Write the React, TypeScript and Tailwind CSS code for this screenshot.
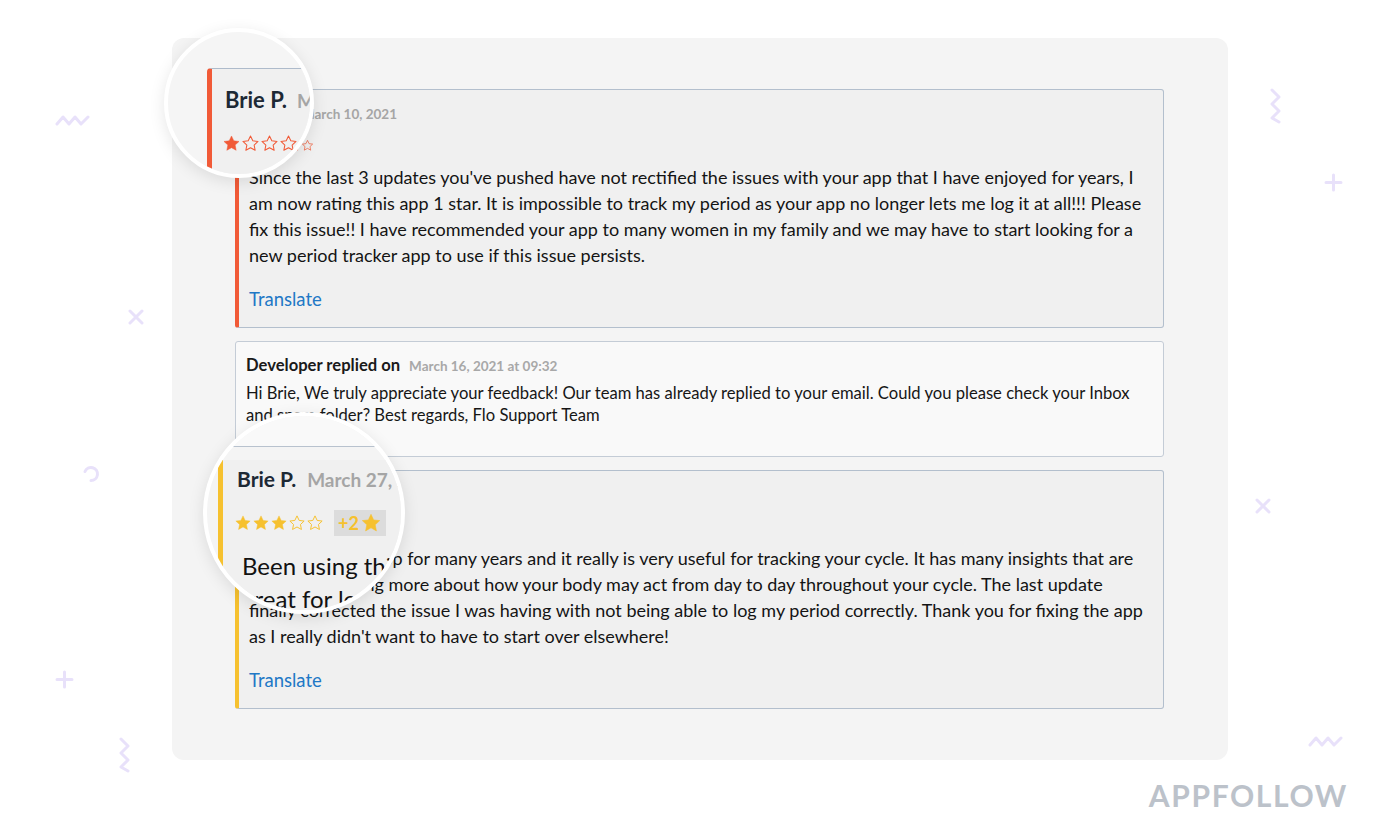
import React from "react";

// ─────────────────────────────────────────────
// Data
// ─────────────────────────────────────────────

const ORANGE = "#f15a37";
const YELLOW = "#f6c12f";
const DECO = "#e8e1fa";

const FIRST_REVIEW =
  "Since the last 3 updates you've pushed have not rectified the issues with your app that I have enjoyed for years, I am now rating this app 1 star. It is impossible to track my period as your app no longer lets me log it at all!!! Please fix this issue!! I have recommended your app to many women in my family and we may have to start looking for a new period tracker app to use if this issue persists.";

const SECOND_REVIEW =
  "Been using this app for many years and it really is very useful for tracking your cycle. It has many insights that are great for learning more about how your body may act from day to day throughout your cycle. The last update finally corrected the issue I was having with not being able to log my period correctly. Thank you for fixing the app as I really didn't want to have to start over elsewhere!";

const STAR_PATH =
  "M12 2.5l2.9 6.1 6.6.8-4.9 4.6 1.3 6.6L12 17.3l-5.9 3.3 1.3-6.6-4.9-4.6 6.6-.8z";

// ─────────────────────────────────────────────
// Small drawings
// ─────────────────────────────────────────────

function Star({ filled, color, size }: { filled: boolean; color: string; size: number }) {
  return (
    <svg
      viewBox="0 0 24 24"
      width={size}
      height={size}
      fill={filled ? color : "none"}
      stroke={color}
      strokeWidth={filled ? 0.6 : 1.3}
      strokeLinejoin="round"
      className="shrink-0"
    >
      <path d={STAR_PATH} />
    </svg>
  );
}

function Stars({ rating, color, size }: { rating: number; color: string; size: number }) {
  return (
    <div className="flex items-center">
      {[1, 2, 3, 4, 5].map((i) => (
        <Star key={i} filled={i <= rating} color={color} size={size} />
      ))}
    </div>
  );
}

function ZigzagH() {
  return (
    <svg viewBox="0 0 36 14" width={36} height={14} fill="none" stroke={DECO} strokeWidth={3} strokeLinecap="round" strokeLinejoin="round">
      <polyline points="2,11 8,4 14,11 20,4 26,11 33,4" />
    </svg>
  );
}

function ZigzagV() {
  return (
    <svg viewBox="0 0 14 36" width={14} height={36} fill="none" stroke={DECO} strokeWidth={3} strokeLinecap="round" strokeLinejoin="round">
      <polyline points="4,2 11,9 4,16 11,23 4,30 11,34" />
    </svg>
  );
}

function Cross() {
  return (
    <svg viewBox="0 0 18 16" width={18} height={16} fill="none" stroke={DECO} strokeWidth={3} strokeLinecap="round">
      <path d="M3 2q6 6 12 12M15 2q-6 6-12 12" />
    </svg>
  );
}

function Plus() {
  return (
    <svg viewBox="0 0 19 19" width={19} height={19} fill="none" stroke={DECO} strokeWidth={3} strokeLinecap="round">
      <path d="M9.5 2v15M2 9.5h15" />
    </svg>
  );
}

function Arc() {
  return (
    <svg viewBox="0 0 20 20" width={20} height={20} fill="none" stroke={DECO} strokeWidth={3} strokeLinecap="round">
      <path d="M4 7.5A6.5 6.5 0 1 1 10 16.5" />
    </svg>
  );
}

// ─────────────────────────────────────────────
// Review card
// ─────────────────────────────────────────────

function ReviewCard({
  accent,
  color,
  date,
  rating,
  bonus,
  text,
}: {
  accent: string;
  color: string;
  date: string;
  rating: number;
  bonus?: boolean;
  text: string;
}) {
  return (
    <div className={`rounded-[3px] border border-[#b3bfcd] border-l-4 ${accent} bg-[#f0f0f0] pt-[13px] pb-[15px] pl-[10px] pr-[14px]`}>
      <div className="flex h-[20px] items-baseline gap-[5px] leading-[20px]">
        <span className="text-[17px] font-bold text-[#1d2935]">Brie P.</span>
        <span className="text-[13.5px] font-bold text-[#a5a5a5]">{date}</span>
      </div>
      <div className="mt-[14px] flex h-[16px] items-center gap-[6px]">
        <Stars rating={rating} color={color} size={13} />
        {bonus && (
          <span className="flex items-center bg-[#dddddd] px-[3px] text-[12px] font-bold leading-[16px] text-[#f6c12f]">
            +2
            <Star filled color={color} size={13} />
          </span>
        )}
      </div>
      <p className="mt-[11px] text-[18px] leading-[26px] text-[#141414]">{text}</p>
      <div className="mt-[18px] text-[18.5px] leading-[26px] text-[#2178c6]">Translate</div>
    </div>
  );
}

// ─────────────────────────────────────────────
// Page
// ─────────────────────────────────────────────

export default function App() {
  return (
    <div className="relative h-[834px] w-[1400px] overflow-hidden bg-white pt-[38px] font-['Lato','Noto_Sans',sans-serif]">
      {/* background doodles */}
      <div className="absolute left-[55px] top-[113px]"><ZigzagH /></div>
      <div className="absolute left-[127px] top-[309px]"><Cross /></div>
      <div className="absolute left-[81px] top-[464px]"><Arc /></div>
      <div className="absolute left-[55px] top-[670px]"><Plus /></div>
      <div className="absolute left-[117px] top-[737px]"><ZigzagV /></div>
      <div className="absolute left-[1268px] top-[88px]"><ZigzagV /></div>
      <div className="absolute left-[1324px] top-[173px]"><Plus /></div>
      <div className="absolute left-[1254px] top-[498px]"><Cross /></div>
      <div className="absolute left-[1308px] top-[734px]"><ZigzagH /></div>

      {/* ── PANEL ── */}
      <div className="relative mx-auto w-[1056px] rounded-[12px] bg-[#f4f4f4] pt-[51px] pb-[51px] pl-[63px] pr-[64px]">
        <div className="flex flex-col gap-[13px]">
          <ReviewCard
            accent="border-l-[#f15a37]"
            color={ORANGE}
            date="March 10, 2021"
            rating={1}
            text={FIRST_REVIEW}
          />

          {/* Developer reply */}
          <div className="rounded-[3px] border border-[#c4ccd6] bg-[#f9f9f9] pt-[13px] pb-[30px] pl-[10px] pr-[14px]">
            <div className="flex h-[20px] items-baseline gap-[9px] leading-[20px]">
              <span className="text-[16.6px] font-bold text-[#1a1a1a]">Developer replied on</span>
              <span className="text-[13.5px] font-bold text-[#a8a8a8]">March 16, 2021 at 09:32</span>
            </div>
            <p className="mt-[7px] text-[16.6px] leading-[22px] text-[#161616]">
              Hi Brie, We truly appreciate your feedback! Our team has already replied to your email. Could you please check your Inbox and spam folder? Best regards, Flo Support Team
            </p>
          </div>

          <ReviewCard
            accent="border-l-[#f6c12f]"
            color={YELLOW}
            date="March 27, 2021"
            rating={3}
            bonus
            text={SECOND_REVIEW}
          />
        </div>
      </div>

      {/* ── LOGO ── */}
      <div className="mt-[17px] flex justify-end pr-[52px]">
        <span className="text-[30px] font-bold leading-[36px] tracking-[1.6px] text-[#bcc2ca]">APPFOLLOW</span>
      </div>

      {/* ── MAGNIFIER 1 ── */}
      <div className="absolute left-[164px] top-[28px] h-[150px] w-[150px] overflow-hidden rounded-full border-4 border-white bg-[#f5f5f5] shadow-[0_4px_16px_rgba(0,0,0,0.10)]">
        <div className="absolute left-[39px] top-[36px] h-[200px] w-[320px] rounded-tl-[4px] border-t border-l-[5px] border-t-[#aebbcb] border-l-[#f15a37] bg-[#f0f0f0] pl-[13px] pt-[18px]">
          <div className="flex items-baseline gap-[10px] whitespace-nowrap leading-[26px]">
            <span className="text-[22px] font-bold text-[#1d2935]">Brie P.</span>
            <span className="text-[19px] font-bold text-[#a5a5a5]">March 10, 2021</span>
          </div>
          <div className="mt-[20px] -ml-[3px]">
            <Stars rating={1} color={ORANGE} size={19} />
          </div>
        </div>
      </div>

      {/* ── MAGNIFIER 2 ── */}
      <div className="absolute left-[203px] top-[412px] h-[202px] w-[202px] overflow-hidden rounded-full border-4 border-white bg-[#f4f4f4] shadow-[0_4px_16px_rgba(0,0,0,0.10)]">
        <div className="h-[31px] border-b border-[#b8c2ce] bg-[#f9f9f9]" />
        <div className="absolute left-[11px] top-[44px] h-[220px] w-[360px] rounded-tl-[4px] border-l-[5px] border-l-[#f6c12f] bg-[#f0f0f0] pl-[14px] pt-[6px]">
          <div className="flex items-baseline gap-[11px] whitespace-nowrap leading-[26px]">
            <span className="text-[21px] font-bold text-[#1d2935]">Brie P.</span>
            <span className="text-[19px] font-bold text-[#a5a5a5]">March 27, 2021</span>
          </div>
          <div className="mt-[19px] -ml-[3px] flex h-[22px] items-center gap-[10px]">
            <Stars rating={3} color={YELLOW} size={18} />
            <span className="flex h-[26px] items-center gap-[1px] bg-[#dcdcdc] px-[4px] text-[18px] font-bold text-[#f6c12f]">
              +2
              <Star filled color={YELLOW} size={22} />
            </span>
          </div>
          <div className="mt-[15px] ml-[5px] whitespace-nowrap text-[24px] leading-[33px] text-[#121212]">
            <div>Been using this app for many years</div>
            <div>great for learning more about</div>
          </div>
        </div>
      </div>
    </div>
  );
}
